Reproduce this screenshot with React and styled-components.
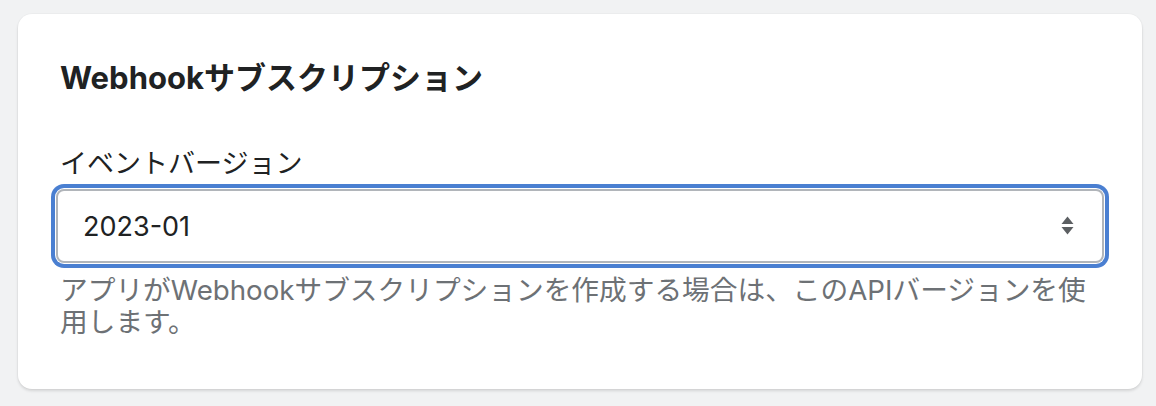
import React from "react";
import styled, { createGlobalStyle } from "styled-components";

const GlobalStyle = createGlobalStyle`
  html, body {
    margin: 0;
    padding: 0;
    background: #f1f2f3;
  }
  body {
    font-family: "Inter", "Noto Sans CJK JP", sans-serif;
    -webkit-font-smoothing: antialiased;
  }
`;

const Page = styled.div`
  width: 1156px;
  height: 406px;
  padding: 14px 14px 0 18px;
  box-sizing: border-box;
`;

const Card = styled.section`
  width: 1124px;
  height: 375px;
  box-sizing: border-box;
  background: #ffffff;
  border-radius: 14px;
  box-shadow: 0 2px 3px rgba(0, 0, 0, 0.12), 0 0 0 1px rgba(0, 0, 0, 0.02);
  padding: 44px 42px 0 42px;
`;

const Title = styled.h2`
  margin: 0 0 48px;
  font-size: 31px;
  line-height: 40px;
  font-weight: 700;
  color: #202223;
`;

const Label = styled.label`
  display: block;
  font-size: 27px;
  line-height: 36px;
  color: #202223;
  margin-bottom: 7px;
`;

const SelectWrap = styled.div`
  position: relative;
  margin: 0 -4px;
`;

const Select = styled.select`
  appearance: none;
  -webkit-appearance: none;
  display: block;
  width: 100%;
  height: 74px;
  box-sizing: border-box;
  border: 2px solid #b1b5ba;
  border-radius: 8px;
  background: #ffffff;
  padding: 0 60px 0 25px;
  font-family: "Inter", "Noto Sans CJK JP", sans-serif;
  font-size: 27px;
  color: #202223;
  outline: none;
  box-shadow: 0 0 0 1px #ffffff, 0 0 0 5px #4a7fd1;
`;

const Arrows = styled.svg`
  position: absolute;
  right: 30px;
  top: 27px;
  pointer-events: none;
`;

const Help = styled.p`
  margin: 11px 0 0;
  font-size: 27.7px;
  line-height: 32px;
  color: #6d7175;
`;

export default function App() {
  return (
    <>
      <GlobalStyle />
      <Page>
        <Card>
          <Title>Webhookサブスクリプション</Title>
          <Label htmlFor="event-version">イベントバージョン</Label>
          <SelectWrap>
            <Select id="event-version" defaultValue="2023-01">
              <option value="2023-01">2023-01</option>
              <option value="2022-10">2022-10</option>
            </Select>
            <Arrows width="13" height="19" viewBox="0 0 13 19">
              <path d="M6.5 0.5 L12.5 8 H0.5 Z" fill="#5c5f62" />
              <path d="M6.5 18.5 L12.5 11 H0.5 Z" fill="#5c5f62" />
            </Arrows>
          </SelectWrap>
          <Help>
            アプリがWebhookサブスクリプションを作成する場合は、このAPIバージョンを使用します。
          </Help>
        </Card>
      </Page>
    </>
  );
}
